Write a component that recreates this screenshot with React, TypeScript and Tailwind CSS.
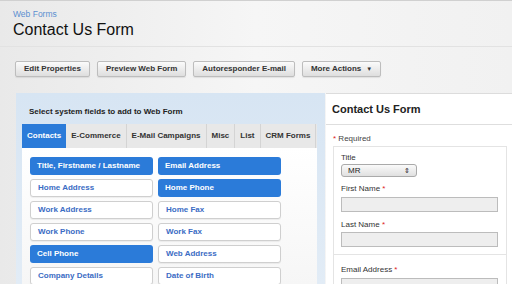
import React from "react";

const fields: { label: string; active?: boolean }[] = [
  { label: "Title, Firstname / Lastname", active: true },
  { label: "Email Address", active: true },
  { label: "Home Address" },
  { label: "Home Phone", active: true },
  { label: "Work Address" },
  { label: "Home Fax" },
  { label: "Work Phone" },
  { label: "Work Fax" },
  { label: "Cell Phone", active: true },
  { label: "Web Address" },
  { label: "Company Details" },
  { label: "Date of Birth" },
];

const tabs = ["Contacts", "E-Commerce", "E-Mail Campaigns", "Misc", "List", "CRM Forms"];

function ToolButton({ children }: { children: React.ReactNode }) {
  return (
    <button className="flex h-[16px] items-center rounded-[2px] border border-[#bdbdbd] bg-gradient-to-b from-[#fbfbfb] to-[#dedede] px-[8px] text-[8px] font-bold text-[#333] shadow-[0_1px_1px_rgba(0,0,0,0.08)]">
      {children}
    </button>
  );
}

function Label({ text, required }: { text: string; required?: boolean }) {
  return (
    <div className="h-[10px] text-[8px] leading-[10px] text-[#333]">
      {text}
      {required && <span className="text-[#d22]"> *</span>}
    </div>
  );
}

export default function App() {
  return (
    <div className="h-[284px] w-[512px] overflow-hidden bg-gradient-to-r from-[#e9e9e9] via-[#f6f6f6] to-[#f1f1f1] font-['Liberation_Sans',Arial,sans-serif]">
      {/* Header */}
      <div className="h-[47px] border-t border-b border-t-[#d0d0d0] border-b-[#e2e2e2] px-[13px] pt-[8px]">
        <div className="h-[11px] text-[8.5px] leading-[11px] text-[#5b8fd0]">Web Forms</div>
        <div className="text-[16px] leading-[20px] text-[#111]">Contact Us Form</div>
      </div>

      {/* Toolbar */}
      <div className="flex h-[46px] gap-[7px] pl-[15px] pt-[14px]">
        <ToolButton>Edit Properties</ToolButton>
        <ToolButton>Preview Web Form</ToolButton>
        <ToolButton>Autoresponder E-mail</ToolButton>
        <ToolButton>
          More Actions
          <span className="ml-[5px] text-[6px]">▼</span>
        </ToolButton>
      </div>

      {/* Main */}
      <div className="flex h-[191px] pl-[16px]">
        {/* Left panel */}
        <div className="flex w-[309px] flex-col bg-gradient-to-b from-[#d7e5f3] to-[#e2ecf6] pl-[6px] pr-[8px]">
          <div className="flex h-[31px] shrink-0 items-center pl-[7px] pt-[7px] text-[8px] font-bold text-[#222]">
            Select system fields to add to Web Form
          </div>
          <div className="flex h-[24px] shrink-0 bg-[#e8e8e8]">
            {tabs.map((t, i) => (
              <div
                key={t}
                className={`flex items-center px-[5px] text-[8px] font-bold ${
                  i === 0
                    ? "bg-[#2b7bd9] text-white"
                    : "border-r border-[#d4d4d4] text-[#333]"
                }`}
              >
                {t}
              </div>
            ))}
          </div>
          <div className="min-h-0 flex-1 bg-gradient-to-b from-white to-[#f6f6f6] pl-[8px] pt-[9px]">
            <div className="grid grid-cols-[123px_123px] gap-x-[5px] gap-y-[4px]">
              {fields.map((f) => (
                <div
                  key={f.label}
                  className={`flex h-[18px] items-center rounded-[3px] pl-[7px] text-[8px] font-bold ${
                    f.active
                      ? "bg-[#2b7bd9] text-white"
                      : "border border-[#cfcfcf] bg-white text-[#3b6cc4] shadow-[0_1px_1px_rgba(0,0,0,0.06)]"
                  }`}
                >
                  {f.label}
                </div>
              ))}
            </div>
          </div>
        </div>

        {/* Right panel */}
        <div className="ml-[1px] flex flex-1 flex-col border-t border-[#dcdcdc] bg-white">
          <div className="flex h-[31px] shrink-0 items-center border-b border-[#dedede] pl-[6px] text-[11px] font-bold text-[#222]">
            Contact Us Form
          </div>
          <div className="min-h-0 flex-1 overflow-hidden pl-[7px] pr-[5px] pt-[9px]">
            <div className="h-[10px] text-[8px] leading-[10px] text-[#444]">
              <span className="text-[#d22]">*</span> Required
            </div>
            <div className="mt-[2px] h-[108px] border border-b-0 border-[#e4e4e4] pl-[7px] pr-[8px] pt-[6px]">
              <Label text="Title" />
              <div className="mt-[1px] flex h-[13px] w-[76px] items-center justify-between rounded-[3px] border border-[#aaa] bg-gradient-to-b from-[#fafafa] to-[#e0e0e0] px-[6px] text-[8px] text-[#222]">
                <span>MR</span>
                <span className="text-[7px] leading-none">⇕</span>
              </div>
              <div className="mt-[7px]">
                <Label text="First Name" required />
              </div>
              <div className="mt-[3px] h-[15px] border border-[#bcbcbc] bg-[#eeeeee]" />
              <div className="mt-[8px]">
                <Label text="Last Name" required />
              </div>
              <div className="mt-[2px] h-[15px] border border-[#bcbcbc] bg-[#eeeeee]" />
            </div>
            <div className="h-[60px] border border-[#e4e4e4] pl-[7px] pr-[8px] pt-[10px]">
              <Label text="Email Address" required />
              <div className="mt-[3px] h-[15px] border border-[#bcbcbc] bg-[#eeeeee]" />
            </div>
          </div>
        </div>
      </div>
    </div>
  );
}
